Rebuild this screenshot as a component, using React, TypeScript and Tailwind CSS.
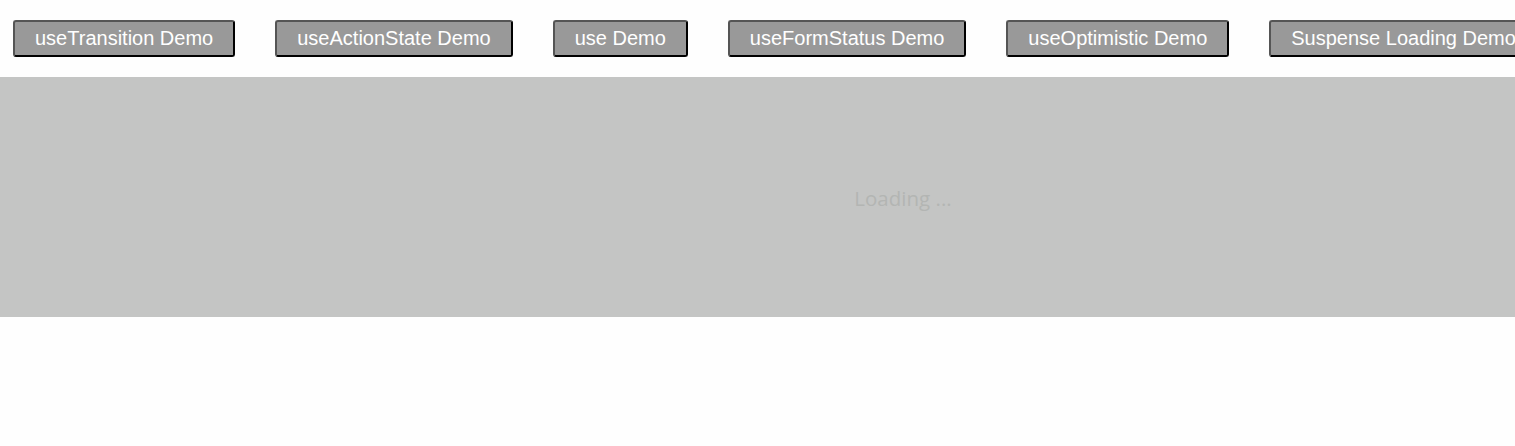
import React from "react";

const labels = [
  "useTransition Demo",
  "useActionState Demo",
  "use Demo",
  "useFormStatus Demo",
  "useOptimistic Demo",
  "Suspense Loading Demo",
];

export default function App() {
  return (
    <div className="w-[1515px] h-[446px] overflow-hidden bg-[#fefefe]">
      <div className="w-[1806px]">
        <nav className="flex flex-nowrap gap-[40px] pl-[13px] py-[20px]">
          {labels.map((l) => (
            <button
              key={l}
              className="shrink-0 whitespace-nowrap bg-[#999999] text-white text-[20px] leading-[23px] px-[20px] py-[5px] border-2 border-t-[#555555] border-l-[#555555] border-b-black border-r-black rounded-[3px]"
              style={{ fontFamily: '"Liberation Sans", Arial, sans-serif' }}
            >
              {l}
            </button>
          ))}
        </nav>
        <div className="h-[240px] bg-[#c4c5c4] flex items-center justify-center pt-[2px]">
          <span
            className="text-[20.5px] text-[#b3b5b3]"
            style={{ fontFamily: '"Open Sans", sans-serif' }}
          >
            Loading ...
          </span>
        </div>
      </div>
    </div>
  );
}
